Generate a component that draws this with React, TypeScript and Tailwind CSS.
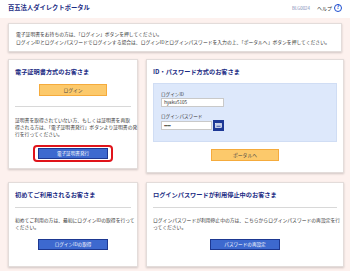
const cardTitle = "text-[6.2px] leading-[8px] font-bold text-[#1c2c84] whitespace-nowrap";
const bodyText = "text-[4.8px] leading-[7px] text-[#333] whitespace-nowrap";

function OrangeButton({ label }: { label: string }) {
  return (
    <div className="w-[68px] h-[12px] bg-[#fcc96b] border border-[#f5ab3c] flex items-center justify-center text-[4.8px] text-[#444]">
      {label}
    </div>
  );
}

function BlueButton({ label }: { label: string }) {
  return (
    <div className="w-[70px] h-[11px] bg-[#3d69cf] border border-[#1d3891] flex items-center justify-center text-[4.6px] text-white">
      {label}
    </div>
  );
}

function Card({ children, className }: { children: React.ReactNode; className?: string }) {
  return (
    <div className={"bg-white border border-[#e3dcda] shadow-[0_1px_2px_rgba(0,0,0,0.18)] " + (className ?? "")}>
      {children}
    </div>
  );
}

export default function App() {
  return (
    <div className="min-h-screen bg-[#fdf1ee] font-['Noto_Sans_CJK_JP',sans-serif]">
      <header className="h-[18px] bg-white flex items-center justify-between pl-2 pr-[8px] pb-[2px]">
        <h1 className="text-[6.3px] font-bold text-[#1c2c84] whitespace-nowrap">百五法人ダイレクトポータル</h1>
        <div className="flex items-center">
          <span className="text-[4.4px] text-[#7b88b5]">BLG0024</span>
          <span className="ml-[7px] text-[5px] text-[#333]">ヘルプ</span>
          <span className="ml-[2px] w-[8px] h-[8px] rounded-full border border-[#1d4fd0] text-[5.5px] leading-none font-bold text-[#1d4fd0] flex items-center justify-center">?</span>
        </div>
      </header>

      <main className="px-2 pt-[5px] pb-2">
        <Card className="h-[29px] px-[7px] pt-[6px]">
          <p className={bodyText + " leading-[8px]"}>
            電子証明書をお持ちの方は、「ログイン」ボタンを押してください。
          </p>
          <p className={bodyText + " leading-[8px]"}>
            ログインIDとログインパスワードでログインする場合は、ログインIDとログインパスワードを入力の上、「ポータルへ」ボタンを押してください。
          </p>
        </Card>

        <div className="grid grid-cols-[130px_198px] gap-x-2 gap-y-[9px] mt-[7px] items-start">
          <Card className="h-[110px] px-[6px] pt-[8px]">
            <h2 className={cardTitle}>電子証明書方式のお客さま</h2>
            <div className="flex justify-center mt-[8px]">
              <OrangeButton label="ログイン" />
            </div>
            <div className="h-px bg-[#d8d8d8] mt-[10px]" />
            <div className="mt-[9px]">
              <p className={bodyText}>証明書を取得されていない方、もしくは証明書を再取</p>
              <p className={bodyText}>得される方は、「電子証明書発行」ボタンより証明書の発</p>
              <p className={bodyText}>行を行ってください。</p>
            </div>
            <div className="flex justify-center mt-[8px]">
              <div className="border-2 border-[#e0141b] rounded-[4px] px-[3px] py-[1px]">
                <BlueButton label="電子証明書発行" />
              </div>
            </div>
          </Card>

          <Card className="h-[114px] px-[6px] pt-[8px]">
            <h2 className={cardTitle}>ID・パスワード方式のお客さま</h2>
            <div className="mt-[7px] h-[59px] bg-[#dde8fb] border border-[#d0ddf4] pl-[7px] pt-[7px]">
              <p className="text-[4.6px] leading-[6px] text-[#333]">ログインID</p>
              <div className="mt-[1px] w-[63px] h-[9px] bg-white border border-[#c9c9c9] flex items-center pl-[2px] text-[4.6px] text-[#333]">
                hyaku5105
              </div>
              <p className="mt-[6px] text-[4.6px] leading-[6px] text-[#333]">ログインパスワード</p>
              <div className="mt-[1px] flex items-center gap-[1px]">
                <div className="w-[51px] h-[9px] bg-white border border-[#c9c9c9] flex items-center pl-[2px] text-[4.6px] text-[#333] tracking-[-0.5px]">
                  ••••••
                </div>
                <div className="w-[11px] h-[11px] bg-[#1d3895] flex items-center justify-center">
                  <svg width="7" height="5" viewBox="0 0 7 5">
                    <rect x="0.5" y="0.5" width="6" height="4" fill="#c8d3ee" stroke="#ffffff" strokeWidth="0.6" />
                    <rect x="1.5" y="2.8" width="4" height="0.8" fill="#1d3895" />
                  </svg>
                </div>
              </div>
            </div>
            <div className="flex justify-center mt-[7px]">
              <OrangeButton label="ポータルへ" />
            </div>
          </Card>

          <Card className="h-[85px] px-[6px] pt-[8px]">
            <h2 className={cardTitle}>初めてご利用されるお客さま</h2>
            <div className="h-px bg-[#d8d8d8] mt-[8px]" />
            <div className="mt-[8px]">
              <p className={bodyText}>初めてご利用の方は、最初にログインIDの取得を行って</p>
              <p className={bodyText}>ください。</p>
            </div>
            <div className="flex justify-center mt-[9px]">
              <BlueButton label="ログインIDの取得" />
            </div>
          </Card>

          <Card className="h-[85px] px-[6px] pt-[8px]">
            <h2 className={cardTitle}>ログインパスワードが利用停止中のお客さま</h2>
            <div className="h-px bg-[#d8d8d8] mt-[8px]" />
            <div className="mt-[8px]">
              <p className={bodyText}>ログインパスワードが利用停止中の方は、こちらからログインパスワードの再設定を行</p>
              <p className={bodyText}>ってください。</p>
            </div>
            <div className="flex justify-center mt-[9px]">
              <BlueButton label="パスワードの再設定" />
            </div>
          </Card>
        </div>
      </main>
    </div>
  );
}
